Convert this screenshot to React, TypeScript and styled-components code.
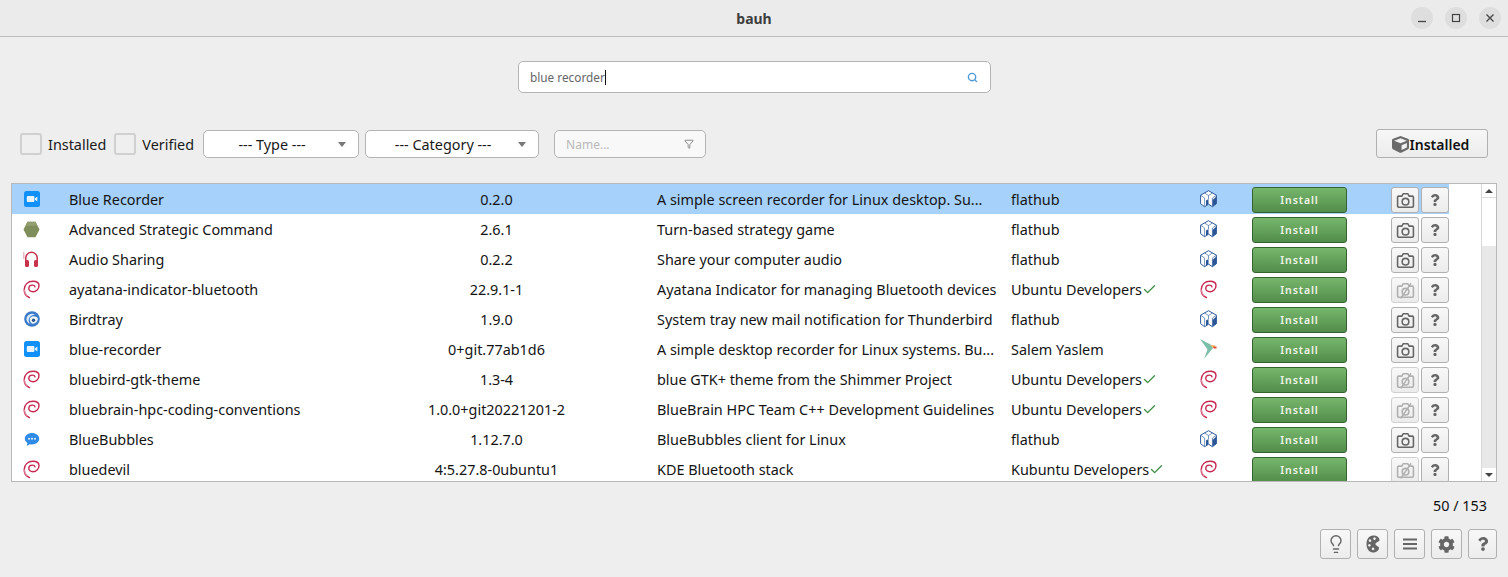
import React from "react";
import styled, { createGlobalStyle } from "styled-components";
import { Search, Funnel, Check, Lightbulb } from "lucide-react";
import { FaCube, FaQuestion, FaCog } from "react-icons/fa";

const Global = createGlobalStyle`
  html, body { margin: 0; padding: 0; background: #eeeeee; overflow: hidden; }
  body { font-family: "Noto Sans", "Open Sans", sans-serif; color: #111; }
`;

const Page = styled.div`
  width: 1508px;
  height: 577px;
  display: flex;
  flex-direction: column;
`;
const TitleBar = styled.header`
  height: 36px;
  border-bottom: 1px solid #bdbdbd;
  background: #ebebeb;
  display: flex;
  align-items: center;
  justify-content: center;
  position: relative;
  flex: none;
`;
const Title = styled.span`
  font-size: 14px;
  font-weight: 700;
  color: #3d3d3d;
`;
const WindowButtons = styled.div`
  position: absolute;
  right: 7px;
  top: 7px;
  display: flex;
  gap: 12px;
`;
const WindowButton = styled.div`
  width: 22px;
  height: 22px;
  border-radius: 50%;
  background: #dedede;
  display: flex;
  align-items: center;
  justify-content: center;
`;
const SearchRow = styled.div`
  display: flex;
  justify-content: center;
  padding: 24px 0 36px 0;
  flex: none;
`;
const SearchBox = styled.div`
  width: 448px;
  height: 30px;
  margin-left: 1px;
  background: #fff;
  border: 1px solid #b4b4b4;
  border-radius: 5px;
  display: flex;
  align-items: center;
  justify-content: space-between;
  padding: 0 12px 0 11px;
  box-sizing: content-box;
`;
const SearchText = styled.span`
  font-size: 11.8px;
  color: #666;
  display: flex;
  align-items: center;
`;
const Caret = styled.i`
  display: inline-block;
  width: 1px;
  height: 15px;
  background: #111;
`;
const FilterRow = styled.div`
  display: flex;
  align-items: center;
  height: 29px;
  padding: 0 20px;
  flex: none;
`;
const CheckBox = styled.div`
  width: 18px;
  height: 18px;
  border: 2px solid #d0d0d0;
  border-radius: 3px;
  background: #efefef;
  margin-right: 6px;
  flex: none;
`;
const FilterLabel = styled.span<{ $after: number }>`
  font-size: 14.4px;
  margin-right: ${(p) => p.$after}px;
  padding-top: 2px;
  color: #1a1a1a;
`;
const Select = styled.div<{ $w: number }>`
  width: ${(p) => p.$w}px;
  height: 28px;
  box-sizing: border-box;
  background: #fff;
  border: 1px solid #b4b4b4;
  border-radius: 5px;
  margin-right: 6px;
  font-size: 14.4px;
  color: #1a1a1a;
  display: flex;
  align-items: center;
  justify-content: center;
  padding: 2px 18px 0 0;
  position: relative;
`;
const SelectArrow = styled.i`
  position: absolute;
  right: 12px;
  top: 11px;
  width: 0;
  height: 0;
  border-left: 4px solid transparent;
  border-right: 4px solid transparent;
  border-top: 5px solid #777;
`;
const NameBox = styled.div`
  width: 152px;
  height: 28px;
  box-sizing: border-box;
  margin-left: 9px;
  background: #f8f8f8;
  border: 1px solid #b4b4b4;
  border-radius: 5px;
  display: flex;
  align-items: center;
  justify-content: space-between;
  padding: 1px 11px 0;
  font-size: 12px;
  color: #b8b8b8;
`;
const InstalledButton = styled.button`
  margin-left: auto;
  width: 112px;
  height: 29px;
  box-sizing: border-box;
  border: 1px solid #b0b0b0;
  border-radius: 3px;
  background: linear-gradient(#f7f7f7, #ececec);
  font: 600 14px "Noto Sans", sans-serif;
  color: #111;
  display: flex;
  align-items: center;
  justify-content: center;
  gap: 1px;
  padding: 1px 3px 0 0;
`;
const Table = styled.section`
  margin: 25px 11px 0 11px;
  height: 299px;
  box-sizing: border-box;
  border: 1px solid #b8b8b8;
  background: #fff;
  display: flex;
  overflow: hidden;
  flex: none;
`;
const Rows = styled.div`
  width: 1437px;
  flex: none;
`;
const Row = styled.div<{ $sel?: boolean }>`
  height: 30px;
  display: grid;
  grid-template-columns: 57px 267px 321px 354px 177px 40px 143px 1fr;
  align-items: center;
  background: ${(p) => (p.$sel ? "#a6d1fb" : "#fff")};
  font-size: 14.4px;
  color: #141414;
  white-space: nowrap;
`;
const IconCell = styled.div`
  display: flex;
  justify-content: center;
  padding-right: 18px;
`;
const Version = styled.div`
  text-align: center;
`;
const Publisher = styled.div`
  display: flex;
  align-items: center;
`;
const TypeCell = styled.div`
  display: flex;
  justify-content: center;
`;
const InstallCell = styled.div`
  display: flex;
  justify-content: center;
  padding-top: 2px;
`;
const InstallButton = styled.button`
  width: 95px;
  height: 26px;
  border: 1px solid #34632f;
  border-radius: 3px;
  background: linear-gradient(#77b66c, #528d4b);
  color: #f0f5e8;
  font: 600 10.5px "Noto Sans", sans-serif;
  letter-spacing: 0.9px;
  padding: 0;
`;
const Actions = styled.div`
  display: flex;
  gap: 2px;
  padding: 2px 0 0 20px;
`;
const SmallButton = styled.button<{ $off?: boolean }>`
  width: 28px;
  height: 26px;
  box-sizing: border-box;
  border: 1px solid ${(p) => (p.$off ? "#d0d0d0" : "#b0b0b0")};
  border-radius: 3px;
  background: linear-gradient(#f8f8f8, #ececec);
  display: flex;
  align-items: center;
  justify-content: center;
  padding: 0;
`;
const Scrollbar = styled.div`
  margin-left: auto;
  width: 14px;
  display: flex;
  flex-direction: column;
  background: #e8e8e8;
  border-left: 1px solid #d8d8d8;
`;
const ScrollButton = styled.div`
  height: 13px;
  background: #fff;
  display: flex;
  align-items: center;
  justify-content: center;
  flex: none;
`;
const ScrollThumb = styled.div`
  height: 49px;
  background: #fff;
  border-top: 1px solid #dcdcdc;
  box-sizing: border-box;
  flex: none;
`;
const ScrollFill = styled.div`
  flex: 1;
`;
const ArrowUp = styled.i`
  border-left: 4px solid transparent;
  border-right: 4px solid transparent;
  border-bottom: 4px solid #444;
`;
const ArrowDown = styled.i`
  border-left: 4px solid transparent;
  border-right: 4px solid transparent;
  border-top: 4px solid #444;
`;
const Count = styled.div`
  height: 47px;
  padding: 0 21px 0 0;
  display: flex;
  align-items: center;
  justify-content: flex-end;
  font-size: 14.4px;
  color: #111;
  flex: none;
`;
const BottomBar = styled.div`
  display: flex;
  justify-content: flex-end;
  gap: 6px;
  padding-right: 11px;
`;
const BottomButton = styled.button<{ $w?: number }>`
  width: ${(p) => p.$w ?? 31}px;
  height: 30px;
  box-sizing: border-box;
  border: 1px solid #b0b0b0;
  border-radius: 3px;
  background: linear-gradient(#f8f8f8, #ececec);
  display: flex;
  align-items: center;
  justify-content: center;
  padding: 0;
  color: #666;
`;

const CameraIcon = ({ off }: { off?: boolean }) => (
  <svg width="19" height="19" viewBox="0 0 24 24" fill="none" stroke={off ? "#b0b0b0" : "#666"} strokeWidth="2" strokeLinejoin="round">
    <path d="M3.500 6.500h4l1.500-3h6l1.500 3h4a1.500 1.500 0 0 1 1.500 1.500v11a1.500 1.500 0 0 1-1.500 1.500h-17A1.500 1.500 0 0 1 2 19V8a1.500 1.500 0 0 1 1.500-1.500z" />
    <circle cx="12" cy="13.500" r="4.200" />
    {off && <path d="M6 22 19 3" />}
  </svg>
);

const Debian = () => (
  <svg width="17" height="19" viewBox="0 0 17 19" fill="none" strokeLinecap="round">
    <path d="M6.500 17.600C2.800 16 1 13 1.200 9.500 1.500 4.500 5 1.200 10 1.200c3.600 0 6 1.800 6 4.300 0 3.700-3 6.200-6 6.200-2.600 0-4.200-1.400-4.200-3.300 0-2 1.700-3.300 3.500-3.300 1.400 0 2.500.7 2.700 1.800" stroke="#c8264f" strokeWidth="1.400" />
    <path d="M4 15.500c-1.600-1.500-2.400-3.500-2.400-5.500" stroke="#e79ab0" strokeWidth="1.200" />
  </svg>
);

const Flatpak = () => (
  <svg width="17" height="18" viewBox="0 0 17 18">
    <path d="M8.500.7 16.400 5.200v8.500l-4 3-3.900-2.500-3.900 2.500-4-3V5.200z" fill="#fff" stroke="#2f5b9c" strokeWidth="1" strokeLinejoin="round" />
    <path d="M6 10.500 8.500 9v5.200L6 15.800z" fill="#2c5596" />
    <path d="M12.400 10 16.400 6.500v7.200l-4 3z" fill="#2c5596" />
    <path d="M4.600 3 8.500 5.600 12.400 3M8.500 5.600v3.400M.6 5.200 4.600 8v8.700M16.400 5.200 12.400 8v8.700" fill="none" stroke="#3f6aa8" strokeWidth=".7" />
  </svg>
);

const Hummingbird = () => (
  <svg width="17" height="20" viewBox="0 0 17 20">
    <path d="M0 0 11.500 6 13 9 4 20 7.500 10.500z" fill="#7cc0ab" />
    <path d="M10 6.200h4.500l2.500 2.300-4 .2z" fill="#f0b060" />
    <path d="M13 7.800h3.500v1.600h-2.700z" fill="#e8483a" />
  </svg>
);

const Zoom = () => (
  <svg width="16" height="16" viewBox="0 0 16 16">
    <rect width="16" height="16" rx="2.500" fill="#1090f8" />
    <rect x="2.800" y="5" width="7.600" height="6" rx="1" fill="#e8f4ff" />
    <path d="M10.800 7.400 13.400 5.400v5.200l-2.600-2z" fill="#e8f4ff" />
  </svg>
);

const Hexagon = () => (
  <svg width="17" height="17" viewBox="0 0 17 17">
    <path d="M4.500.8h8l4 7.700-4 7.700h-8l-4-7.700z" fill="#7f8e5a" />
    <path d="M4.500.8h8l2 4h-12z" fill="#939f70" />
  </svg>
);

const Headphones = () => (
  <svg width="17" height="17" viewBox="0 0 17 17" fill="none">
    <path d="M2.800 11V7a5.700 5.700 0 0 1 11.400 0v4" stroke="#c8324b" strokeWidth="1.500" />
    <rect x="2" y="9" width="4" height="7" rx="1.500" fill="#c8324b" />
    <rect x="11" y="9" width="4" height="7" rx="1.500" fill="#c8324b" />
    <rect x="0" y="1" width="1.500" height="7" fill="#e7bcc4" />
  </svg>
);

const Birdtray = () => (
  <svg width="16" height="16" viewBox="0 0 16 16">
    <circle cx="8" cy="8" r="7.800" fill="#3a7ac8" />
    <path d="M2.500 7C4 3 8 2 11 3.500 8.500 3.800 6 5 5 7.500 4.400 9 4.600 11 6 13 3.500 12 2 9.500 2.500 7z" fill="#dcebfa" />
    <path d="M6.500 6.500c2.500-2 6-1.200 7.400 1-.2 3-2.500 5.500-5.500 5.200C6 11.500 5 8.500 6.500 6.500z" fill="#eef5fc" />
    <circle cx="9.500" cy="9.300" r="1.700" fill="#28538c" />
  </svg>
);

const Bubbles = () => (
  <svg width="16" height="15" viewBox="0 0 16 15">
    <path d="M8 1c4 0 7.200 2.500 7.200 5.800S12 12.500 8 12.500c-.8 0-1.500-.1-2.200-.3L2.800 14l.6-3C1.800 10 .8 8.500.8 6.800.8 3.500 4 1 8 1z" fill="#2f8be6" />
    <circle cx="5" cy="6.800" r="1" fill="#e8f3ff" />
    <circle cx="8" cy="6.800" r="1" fill="#e8f3ff" />
    <circle cx="11" cy="6.800" r="1" fill="#e8f3ff" />
  </svg>
);

const PaletteIcon = () => (
  <svg width="14" height="18" viewBox="0 0 14 18" fillRule="evenodd">
    <path
      d="M7 .5C11 .5 13.500 2.500 13.500 5 13.500 7 9.500 7 9.500 9 9.500 11 13 11 13 13 13 15.500 10 17.500 7 17.500 3 17.500 .5 13.500 .5 9 .5 4.500 3 .5 7 .5ZM8.500 2.300a1.300 1.300 0 1 0 .01 0ZM4 4.300a1.300 1.300 0 1 0 .01 0ZM3.400 9a1.300 1.300 0 1 0 .01 0ZM7 12.600a1.300 1.300 0 1 0 .01 0Z"
      fill="#666"
    />
  </svg>
);

type Item = {
  icon: React.ReactNode;
  name: string;
  version: string;
  desc: string;
  pub: string;
  verified?: boolean;
  type: React.ReactNode;
  noShot?: boolean;
};

const items: Item[] = [
  { icon: <Zoom />, name: "Blue Recorder", version: "0.2.0", desc: "A simple screen recorder for Linux desktop. Su...", pub: "flathub", type: <Flatpak /> },
  { icon: <Hexagon />, name: "Advanced Strategic Command", version: "2.6.1", desc: "Turn-based strategy game", pub: "flathub", type: <Flatpak /> },
  { icon: <Headphones />, name: "Audio Sharing", version: "0.2.2", desc: "Share your computer audio", pub: "flathub", type: <Flatpak /> },
  { icon: <Debian />, name: "ayatana-indicator-bluetooth", version: "22.9.1-1", desc: "Ayatana Indicator for managing Bluetooth devices", pub: "Ubuntu Developers", verified: true, type: <Debian />, noShot: true },
  { icon: <Birdtray />, name: "Birdtray", version: "1.9.0", desc: "System tray new mail notification for Thunderbird", pub: "flathub", type: <Flatpak /> },
  { icon: <Zoom />, name: "blue-recorder", version: "0+git.77ab1d6", desc: "A simple desktop recorder for Linux systems. Bu...", pub: "Salem Yaslem", type: <Hummingbird /> },
  { icon: <Debian />, name: "bluebird-gtk-theme", version: "1.3-4", desc: "blue GTK+ theme from the Shimmer Project", pub: "Ubuntu Developers", verified: true, type: <Debian />, noShot: true },
  { icon: <Debian />, name: "bluebrain-hpc-coding-conventions", version: "1.0.0+git20221201-2", desc: "BlueBrain HPC Team C++ Development Guidelines", pub: "Ubuntu Developers", verified: true, type: <Debian />, noShot: true },
  { icon: <Bubbles />, name: "BlueBubbles", version: "1.12.7.0", desc: "BlueBubbles client for Linux", pub: "flathub", type: <Flatpak /> },
  { icon: <Debian />, name: "bluedevil", version: "4:5.27.8-0ubuntu1", desc: "KDE Bluetooth stack", pub: "Kubuntu Developers", verified: true, type: <Debian />, noShot: true },
];

export default function App() {
  return (
    <Page>
      <Global />
      <TitleBar>
        <Title>bauh</Title>
        <WindowButtons>
          <WindowButton>
            <svg width="10" height="10" viewBox="0 0 10 10"><path d="M1 8.500h8" stroke="#444" strokeWidth="1.300" /></svg>
          </WindowButton>
          <WindowButton>
            <svg width="10" height="10" viewBox="0 0 10 10" fill="none"><rect x="1.500" y="1.500" width="7" height="7" stroke="#444" strokeWidth="1.200" /></svg>
          </WindowButton>
          <WindowButton>
            <svg width="10" height="10" viewBox="0 0 10 10"><path d="M1.500 1.500l7 7M8.500 1.500l-7 7" stroke="#444" strokeWidth="1.300" /></svg>
          </WindowButton>
        </WindowButtons>
      </TitleBar>
      <SearchRow>
        <SearchBox>
          <SearchText>blue recorder<Caret /></SearchText>
          <Search size={11} color="#4a9ad8" strokeWidth={3} />
        </SearchBox>
      </SearchRow>
      <FilterRow>
        <CheckBox />
        <FilterLabel $after={8}>Installed</FilterLabel>
        <CheckBox />
        <FilterLabel $after={9}>Verified</FilterLabel>
        <Select $w={156}>--- Type ---<SelectArrow /></Select>
        <Select $w={174}>--- Category ---<SelectArrow /></Select>
        <NameBox>
          Name...
          <Funnel size={10} color="#777" />
        </NameBox>
        <InstalledButton>
          <FaCube size={17} color="#6a6a6a" />
          Installed
        </InstalledButton>
      </FilterRow>
      <Table>
        <Rows>
          {items.map((it, i) => (
            <Row key={it.name} $sel={i === 0}>
              <IconCell>{it.icon}</IconCell>
              <div>{it.name}</div>
              <Version>{it.version}</Version>
              <div>{it.desc}</div>
              <Publisher>
                {it.pub}
                {it.verified && <Check size={15} color="#3f8f46" strokeWidth={2.2} />}
              </Publisher>
              <TypeCell>{it.type}</TypeCell>
              <InstallCell><InstallButton>Install</InstallButton></InstallCell>
              <Actions>
                <SmallButton $off={it.noShot}><CameraIcon off={it.noShot} /></SmallButton>
                <SmallButton><FaQuestion size={12} color="#666" /></SmallButton>
              </Actions>
            </Row>
          ))}
        </Rows>
        <Scrollbar>
          <ScrollButton><ArrowUp /></ScrollButton>
          <ScrollThumb />
          <ScrollFill />
          <ScrollButton><ArrowDown /></ScrollButton>
        </Scrollbar>
      </Table>
      <Count>50 / 153</Count>
      <BottomBar>
        <BottomButton><Lightbulb size={20} color="#666" strokeWidth={1.700} /></BottomButton>
        <BottomButton><PaletteIcon /></BottomButton>
        <BottomButton>
          <svg width="16" height="12" viewBox="0 0 16 12"><path d="M1 1.500h14M1 6h14M1 10.500h14" stroke="#666" strokeWidth="2" /></svg>
        </BottomButton>
        <BottomButton><FaCog size={17} /></BottomButton>
        <BottomButton $w={29}><FaQuestion size={14} /></BottomButton>
      </BottomBar>
    </Page>
  );
}
